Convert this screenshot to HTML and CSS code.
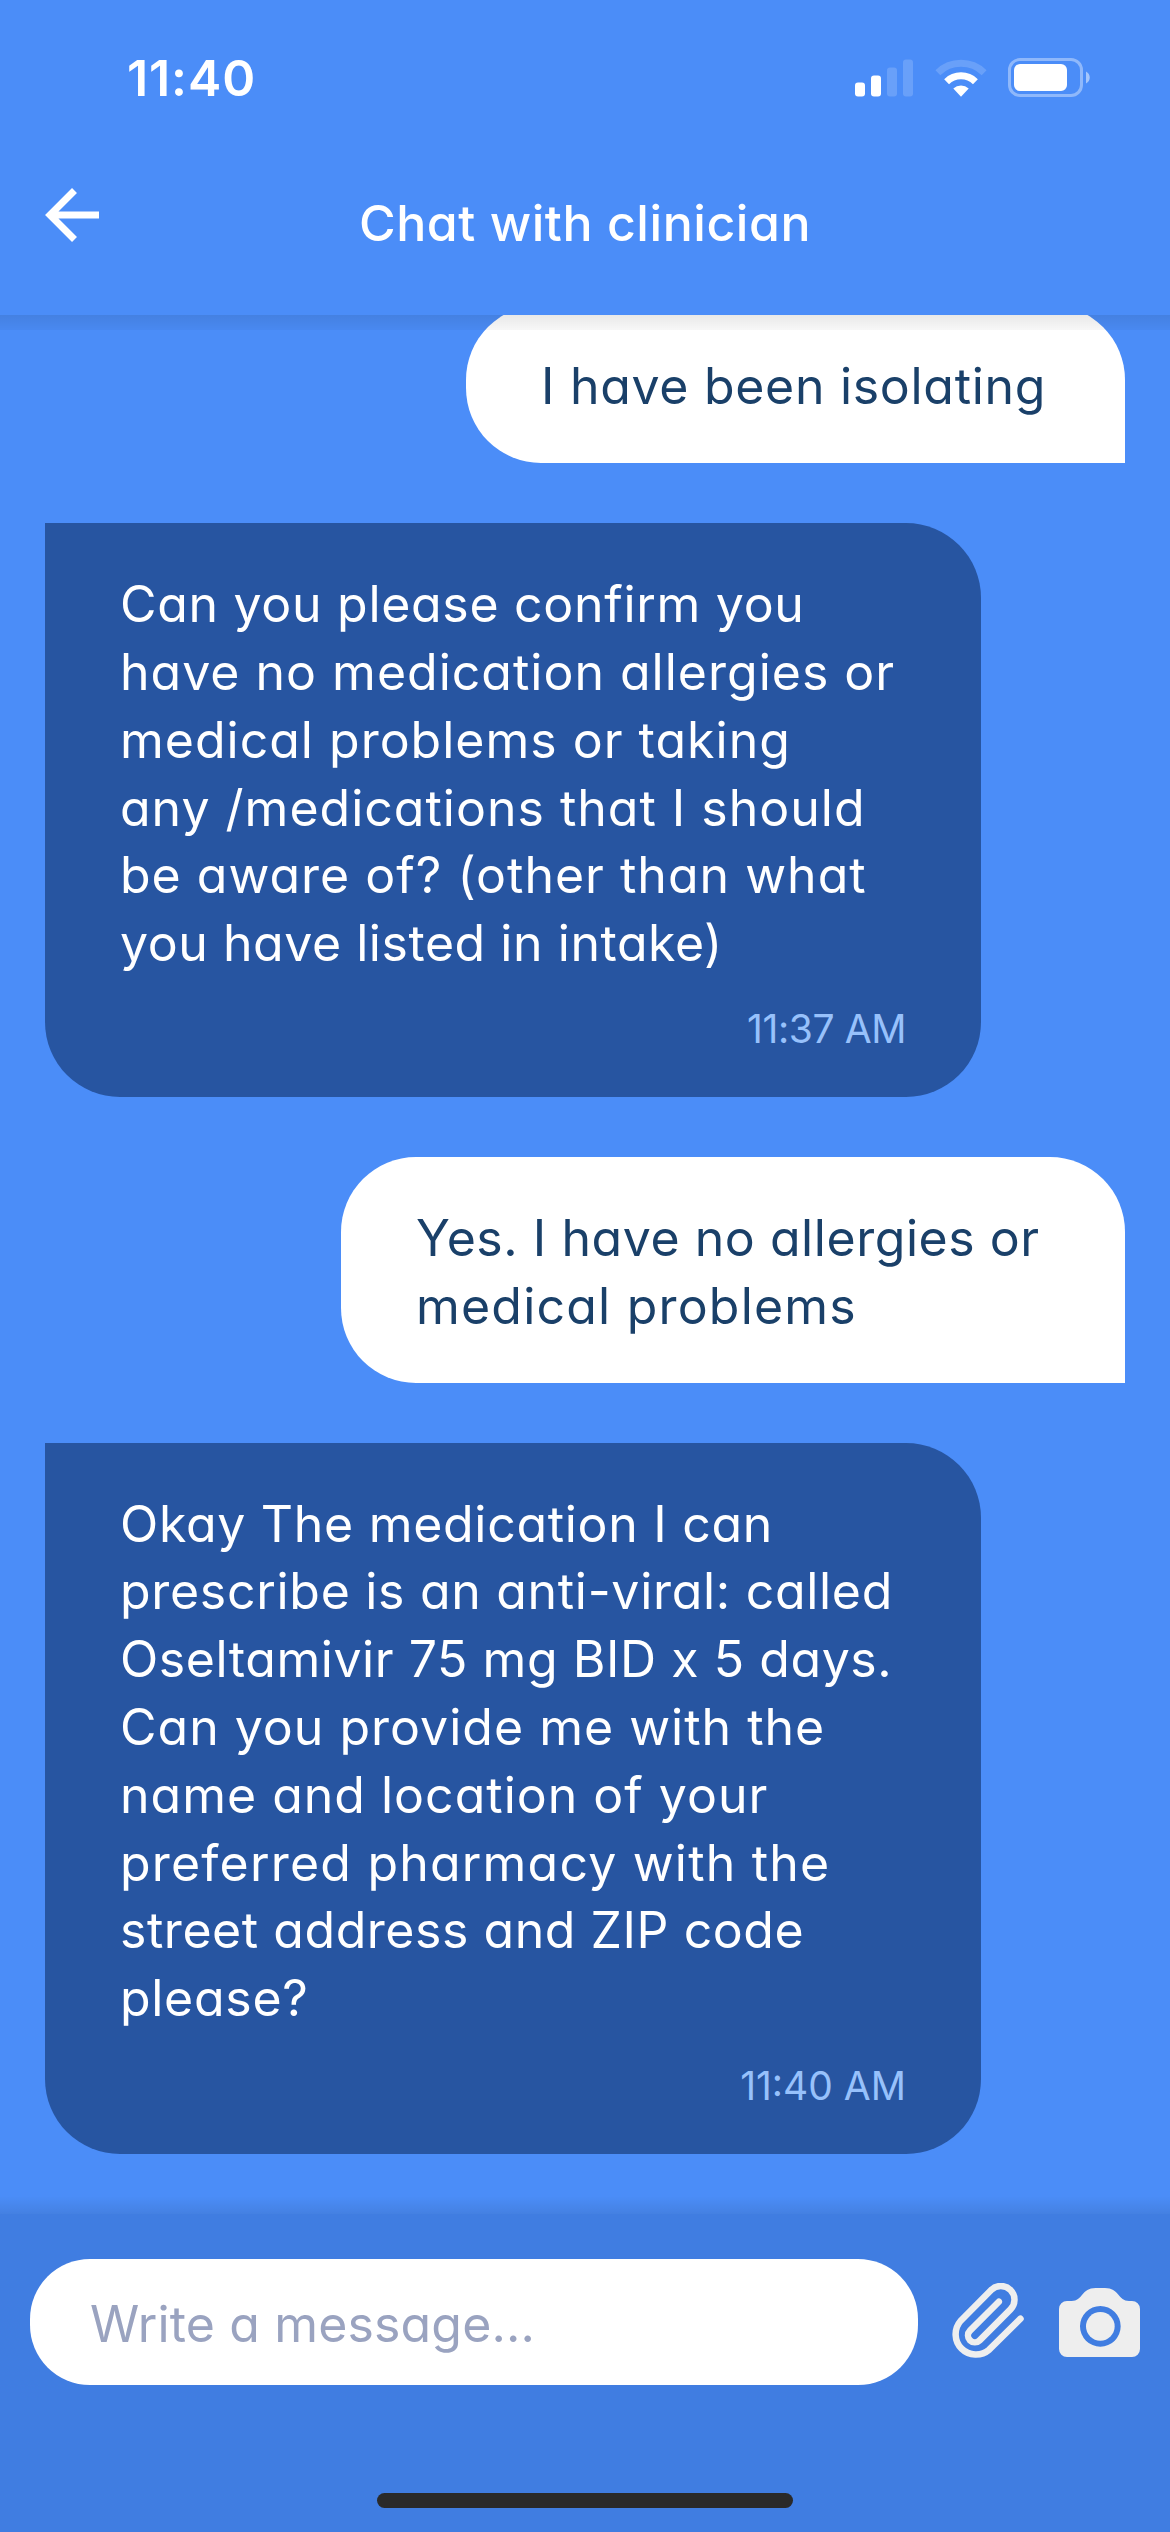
FILE: index.html
```html
<!DOCTYPE html>
<html lang="en">

<head>
    <meta charset="UTF-8">
    <meta name="viewport" content="width=device-width, initial-scale=1.0">
    <title>Chat with clinician</title>
    <link rel="stylesheet" href="styles.css">
</head>

<body>
    <div class="screen">
        <header class="header">
            <!-- Status bar -->
            <div class="status-bar">
                <span class="clock">11:40</span>
                <div class="status-icons">
                    <svg class="signal" viewBox="0 0 58 38" fill="#fff">
                        <rect x="0" y="23.5" width="10" height="14" rx="3" />
                        <rect x="16" y="16.5" width="10" height="21" rx="3" />
                        <rect x="32" y="8.5" width="10" height="29" rx="3" opacity="0.17" />
                        <rect x="48" y="0.5" width="10" height="37" rx="3" opacity="0.17" />
                    </svg>
                    <svg class="wifi" viewBox="0 0 52 38" fill="none" stroke="#fff" stroke-width="7">
                        <path d="M2.9 13.7A33.2 33.2 0 0 1 49.1 13.7" opacity="0.17" />
                        <path d="M11.6 22.7A20.7 20.7 0 0 1 40.4 22.7" />
                        <path d="M26 37.8L18.3 29.4A12 12 0 0 1 33.7 29.4Z" fill="#fff" stroke="none" />
                    </svg>
                    <svg class="battery" viewBox="0 0 83 39">
                        <rect x="1.5" y="1.5" width="72" height="36" rx="10.5" fill="none" stroke="#fff" stroke-width="3" opacity="0.38" />
                        <rect x="6" y="6" width="53" height="27" rx="6" fill="#fff" />
                        <path d="M78 13.5C83 16 83 23 78 25.5Z" fill="#fff" opacity="0.5" />
                    </svg>
                </div>
            </div>

            <div class="nav">
                <svg class="back" viewBox="0 0 54 54" fill="none" stroke="#fff" stroke-width="7">
                    <path d="M29.5 2.5L5 27L29.5 51.5M5 27H54" />
                </svg>
                <h1>Chat with clinician</h1>
            </div>
        </header>

        <!-- Messages -->
        <main class="chat">
            <div class="bubble sent isolating">
                <p class="tight">I have been isolating</p>
            </div>

            <div class="bubble received">
                <p class="tight">Can you please confirm you</p>
                <p class="loose">have no medication allergies or</p>
                <p class="loose">medical problems or taking</p>
                <p class="loose">any /medications that I should</p>
                <p class="loose">be aware of? (other than what</p>
                <p class="tighter">you have listed in intake)</p>
                <span class="time first">11:37 AM</span>
            </div>

            <div class="bubble sent allergies">
                <p class="tighter">Yes. I have no allergies or</p>
                <p class="looser">medical problems</p>
            </div>

            <div class="bubble received">
                <p class="tight">Okay The medication I can</p>
                <p class="tight">prescribe is an anti-viral: called</p>
                <p class="tighter">Oseltamivir 75 mg BID x 5 days.</p>
                <p class="loose">Can you provide me with the</p>
                <p class="loose">name and location of your</p>
                <p class="looser">preferred pharmacy with the</p>
                <p class="tighter">street address and ZIP code</p>
                <p class="tight">please?</p>
                <span class="time">11:40 AM</span>
            </div>
        </main>

        <footer class="footer">
            <div class="composer">
                <input type="text" class="message-input" placeholder="Write a message...">
                <svg class="clip" viewBox="94 279 218 228" fill="none" stroke="#eee" stroke-width="19.5" stroke-linecap="round" stroke-linejoin="round">
                    <path d="M302 386L208 479A61 61 0 0 1 122 393L214 300A41 41 0 0 1 272 358L179.500 451A20.500 20.500 0 0 1 150.500 422L237 335" />
                </svg>
                <svg class="camera" viewBox="417 294 243 207" fill="#eee">
                    <path fill-rule="evenodd" d="M441 333H455C488 333 484 294 527 294H555C597 294 595 333 627 333H636A24 24 0 0 1 660 357V477A24 24 0 0 1 636 501H441A24 24 0 0 1 417 477V357A24 24 0 0 1 441 333ZM541 348A61 61 0 1 0 541 470A61 61 0 1 0 541 348Z" />
                    <circle cx="541" cy="409" r="43" />
                </svg>
            </div>
            <div class="home-indicator"></div>
        </footer>
    </div>
</body>

</html>
```
FILE: styles.css
```css
* {
    box-sizing: border-box;
}

body {
    margin: 0;
    font-family: Inter, sans-serif;
    font-feature-settings: "cv11";
    background-color: #4b8df8;
}

.screen {
    display: flex;
    flex-direction: column;
    width: 1170px;
    height: 2532px;
    overflow: hidden;
}

/* Header */
.header {
    height: 315px;
    flex-shrink: 0;
    color: white;
}

.status-bar {
    display: flex;
    justify-content: space-between;
    padding: 48px 79px 0 127px;
}

.clock {
    font-size: 50px;
    font-weight: 600;
    line-height: 60px;
    letter-spacing: 0.9px;
}

.status-icons {
    display: flex;
    align-items: center;
    height: 59px;
}

.signal {
    width: 58px;
    height: 38px;
    margin-right: 21.5px;
}

.wifi {
    width: 52px;
    height: 38px;
    margin-right: 21.5px;
}

.battery {
    width: 83px;
    height: 39px;
}

.nav {
    display: grid;
    grid-template-columns: 1fr auto 1fr;
    padding: 80px 45px 0;
}

.back {
    width: 54px;
    height: 54px;
}

h1 {
    margin: 5px 0 0;
    font-size: 50px;
    font-weight: 450;
    line-height: 60px;
    letter-spacing: 0.55px;
}

/* Messages */
.chat {
    position: relative;
    display: flex;
    flex: 1;
    flex-direction: column;
    justify-content: flex-end;
    gap: 60px;
    min-height: 0;
    padding: 0 45px 60px;
    overflow: hidden;
}

.chat::before,
.chat::after {
    content: "";
    position: absolute;
    left: 0;
    right: 0;
    height: 15px;
}

.chat::before {
    top: 0;
    background: linear-gradient(rgba(0, 0, 0, 0.09), rgba(0, 0, 0, 0.03));
}

.chat::after {
    bottom: 0;
    height: 18px;
    background: linear-gradient(rgba(0, 0, 0, 0), rgba(0, 0, 0, 0.09));
}

.bubble {
    flex-shrink: 0;
    padding: 48px 75px 42px;
    font-size: 50px;
    line-height: 67.8px;
}

.bubble p {
    margin: 0;
    white-space: nowrap;
}

.received {
    width: 936px;
    border-radius: 0 75px 75px 75px;
    background-color: #2755a1;
    color: white;
}

.sent {
    align-self: flex-end;
    border-radius: 75px 75px 0 75px;
    background-color: white;
    color: #1a4069;
}

.isolating {
    width: 659px;
}

.allergies {
    width: 784px;
}

.tighter {
    letter-spacing: 0.55px;
}

.tight {
    letter-spacing: 0.7px;
}

.loose {
    letter-spacing: 1px;
}

.looser {
    letter-spacing: 1.2px;
}

.time {
    display: block;
    margin-top: 27px;
    font-size: 39px;
    line-height: 52px;
    text-align: right;
    color: #97c1fb;
}

.time.first {
    margin-top: 25px;
    letter-spacing: -0.4px;
}

/* Message input */
.footer {
    height: 318px;
    flex-shrink: 0;
    padding: 45px 30px 0;
    background-color: #407de1;
}

.composer {
    display: flex;
    align-items: center;
}

.message-input {
    width: 888px;
    height: 126px;
    padding: 4px 60px 0;
    border: none;
    border-radius: 60px;
    outline: none;
    font: inherit;
    font-size: 50px;
    font-feature-settings: "cv11";
    letter-spacing: 0.15px;
    background-color: white;
}

.message-input::placeholder {
    color: #9aa3c0;
}

.clip {
    width: 73px;
    height: 76px;
    margin: 0 35px 2px 33px;
}

.camera {
    width: 81px;
    height: 69px;
}

.home-indicator {
    width: 416px;
    height: 15px;
    margin: 108px auto 0;
    border-radius: 8px;
    background-color: #2a2a2a;
}
```
